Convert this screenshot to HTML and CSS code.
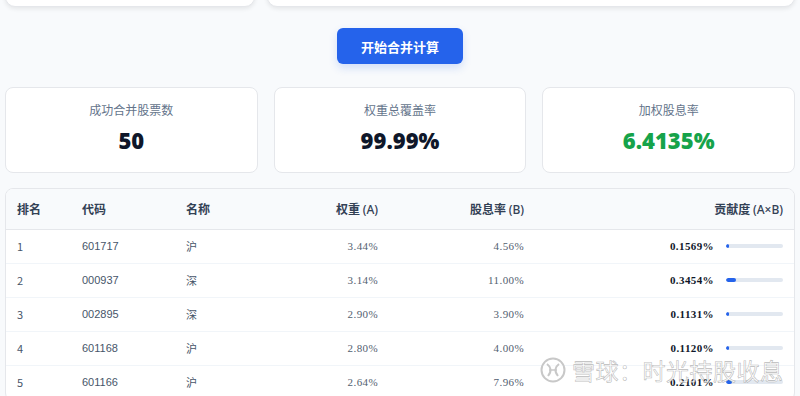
FILE: index.html
```html
<!DOCTYPE html>
<html lang="zh-CN">
<head>
    <meta charset="UTF-8">
    <meta name="viewport" content="width=device-width, initial-scale=1.0">
    <title>股息组合合并计算</title>
    <link rel="stylesheet" href="styles.css">
</head>
<body>
<div class="page">

    <!-- input panels (scrolled above) -->
    <div class="inputs">
        <div class="panel"></div>
        <div class="panel"></div>
    </div>

    <div class="actions">
        <button class="btn-merge">开始合并计算</button>
    </div>

    <div class="stats">
        <div class="stat">
            <p class="stat-label">成功合并股票数</p>
            <p class="stat-value">50</p>
        </div>
        <div class="stat">
            <p class="stat-label">权重总覆盖率</p>
            <p class="stat-value">99.99%</p>
        </div>
        <div class="stat">
            <p class="stat-label">加权股息率</p>
            <p class="stat-value green">6.4135%</p>
        </div>
    </div>

    <div class="table-box">
        <table class="result-table">
            <thead>
                <tr>
                    <th class="col-rank">排名</th>
                    <th class="col-code">代码</th>
                    <th class="col-name">名称</th>
                    <th class="num col-weight">权重 <span class="unit">(A)</span></th>
                    <th class="num col-yield">股息率 <span class="unit">(B)</span></th>
                    <th class="num col-contrib">贡献度 <span class="unit">(A×B)</span></th>
                </tr>
            </thead>
            <tbody>
                <tr>
                    <td>1</td><td class="code">601717</td><td>沪</td>
                    <td class="num pct">3.44%</td><td class="num pct">4.56%</td>
                    <td class="num"><div class="contrib"><span>0.1569%</span><div class="bar"><div class="fill" style="width:5%"></div></div></div></td>
                </tr>
                <tr>
                    <td>2</td><td class="code">000937</td><td>深</td>
                    <td class="num pct">3.14%</td><td class="num pct">11.00%</td>
                    <td class="num"><div class="contrib"><span>0.3454%</span><div class="bar"><div class="fill" style="width:18%"></div></div></div></td>
                </tr>
                <tr>
                    <td>3</td><td class="code">002895</td><td>深</td>
                    <td class="num pct">2.90%</td><td class="num pct">3.90%</td>
                    <td class="num"><div class="contrib"><span>0.1131%</span><div class="bar"><div class="fill" style="width:4%"></div></div></div></td>
                </tr>
                <tr>
                    <td>4</td><td class="code">601168</td><td>沪</td>
                    <td class="num pct">2.80%</td><td class="num pct">4.00%</td>
                    <td class="num"><div class="contrib"><span>0.1120%</span><div class="bar"><div class="fill" style="width:4%"></div></div></div></td>
                </tr>
                <tr>
                    <td>5</td><td class="code">601166</td><td>沪</td>
                    <td class="num pct">2.64%</td><td class="num pct">7.96%</td>
                    <td class="num"><div class="contrib"><span>0.2101%</span><div class="bar"><div class="fill" style="width:10%"></div></div></div></td>
                </tr>
            </tbody>
        </table>
    </div>

</div>

<!-- watermark -->
<div class="watermark">
    <svg width="26" height="26" viewBox="0 0 26 26" fill="none" stroke="#c8c8c8" stroke-width="2">
        <circle cx="13" cy="13" r="11.5" fill="rgba(255,255,255,0.6)"/>
        <path d="M7 7 C11 10, 12 14, 8 19"/>
        <path d="M19 7 C15 10, 14 14, 18 19"/>
        <path d="M9 13 L17 13" stroke-width="1.5"/>
    </svg>
    <span>雪球：时光持股收息</span>
</div>
</body>
</html>
```

FILE: styles.css
```css
body {
    margin: 0;
    background-color: #f8fafc;
    font-family: "Noto Sans CJK SC", "Noto Sans", sans-serif;
    color: #1e293b;
    overflow: hidden;
}

.page {
    padding: 0 5px;
    margin-top: -75px;
}

/* Input panels */
.inputs {
    display: grid;
    grid-template-columns: 250px 1fr;
    gap: 12px;
}

.panel {
    height: 80px;
    background-color: #fff;
    border: 1px solid #e5e7eb;
    border-radius: 10px;
    box-shadow: 0 2px 4px rgba(0, 0, 0, 0.08);
}

/* Button */
.actions {
    display: flex;
    justify-content: center;
    padding: 21px 0 23px;
}

.btn-merge {
    width: 126px;
    height: 36px;
    background-color: #2563eb;
    color: #fff;
    border: none;
    border-radius: 6px;
    font-family: "Noto Sans CJK SC", sans-serif;
    font-size: 13px;
    font-weight: 700;
    box-shadow: 0 4px 8px rgba(37, 99, 235, 0.18);
    cursor: pointer;
}

/* Stat cards */
.stats {
    display: grid;
    grid-template-columns: repeat(3, 1fr);
    gap: 16px;
}

.stat {
    height: 84px;
    background-color: #fff;
    border: 1px solid #e5e7eb;
    border-radius: 8px;
    text-align: center;
}

.stat-label {
    margin: 13px 0 0;
    font-size: 12px;
    line-height: 18px;
    color: #64748b;
}

.stat-value {
    margin: 6px 0 0;
    font-family: "Open Sans", sans-serif;
    font-size: 22px;
    font-weight: 800;
    line-height: 30px;
    color: #0f172a;
}

.stat-value.green {
    color: #16a34a;
}

/* Table */
.table-box {
    margin-top: 15px;
    background-color: #fff;
    border: 1px solid #e5e7eb;
    border-radius: 8px;
    overflow: hidden;
}

.result-table {
    width: 100%;
    border-collapse: collapse;
    table-layout: fixed;
}

.result-table th,
.result-table td {
    box-sizing: border-box;
    padding: 0 11px;
}

.result-table th {
    height: 40px;
    background-color: #f8fafc;
    border-bottom: 1px solid #e5e7eb;
    font-size: 12px;
    font-weight: 700;
    color: #334155;
    text-align: left;
}

.result-table th .unit {
    font-family: "Noto Sans", sans-serif;
    font-weight: 500;
    font-size: 12px;
}

.result-table td {
    height: 34px;
    border-bottom: 1px solid #f1f5f9;
    font-size: 11px;
    color: #475569;
}

.result-table .num {
    text-align: right;
}

.col-rank { width: 65px; }
.col-code { width: 104px; }
.col-name { width: 116px; }
.col-weight { width: 98px; }
.col-yield { width: 146px; }

.result-table td.code {
    font-family: "Liberation Sans", sans-serif;
}

.result-table td.pct {
    font-family: "Liberation Serif", serif;
    letter-spacing: 0.4px;
    color: #52606f;
}

.contrib {
    display: flex;
    justify-content: flex-end;
    align-items: center;
    gap: 12px;
}

.contrib span {
    font-family: "Liberation Serif", serif;
    font-weight: 700;
    font-size: 11px;
    letter-spacing: 0.4px;
    color: #0f172a;
}

.bar {
    width: 57px;
    height: 4px;
    background-color: #e2e8f0;
    border-radius: 2px;
    overflow: hidden;
}

.fill {
    height: 100%;
    min-width: 3px;
    background-color: #2563eb;
    border-radius: 2px;
}

/* Watermark */
.watermark {
    position: absolute;
    left: 540px;
    top: 356px;
    display: flex;
    align-items: center;
    gap: 6px;
    pointer-events: none;
}

.watermark span {
    font-family: "Noto Sans CJK SC", sans-serif;
    font-size: 23px;
    line-height: 28px;
    letter-spacing: 0.5px;
    color: rgba(255, 255, 255, 0.8);
    -webkit-text-stroke: 0.6px rgba(140, 140, 140, 0.6);
}
```
